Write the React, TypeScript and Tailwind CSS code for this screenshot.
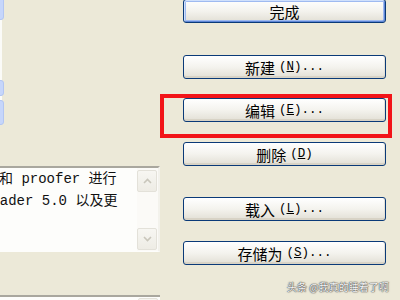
import React from "react";

const MONO = '"Liberation Mono", "Noto Sans CJK SC", monospace';
const CJK = '"Noto Sans CJK SC", sans-serif';

function XPButton({
  cjk,
  latin,
  def = false,
  className = "",
}: {
  cjk: string;
  latin?: React.ReactNode;
  def?: boolean;
  className?: string;
}) {
  return (
    <div
      className={`h-[24px] w-[203px] shrink-0 rounded-[3px] border border-[#0a3a78] bg-linear-to-b from-[#ffffff] via-[#f4f3ee] to-[#e2dfd5] flex items-center justify-center leading-none text-black whitespace-pre ${
        def
          ? "shadow-[inset_1px_1px_0_#cfe0fc,inset_-1px_-1px_0_#5f86d6,inset_0_0_0_2px_#9fbaf0]"
          : "shadow-[inset_0_-2px_0_#d8d3c6,inset_-1px_0_0_#e4e1d8]"
      } ${className}`}
    >
      <span className="text-[15px]" style={{ fontFamily: CJK }}>
        {cjk}
      </span>
      {latin && (
        <span className="ml-[4px] text-[12.5px]" style={{ fontFamily: MONO }}>
          {latin}
        </span>
      )}
    </div>
  );
}

function Chevron({ up }: { up: boolean }) {
  return (
    <svg width="9" height="6" viewBox="0 0 9 6">
      <path
        d={up ? "M1 5 L4.5 1.5 L8 5" : "M1 1 L4.5 4.5 L8 1"}
        fill="none"
        stroke="#c9c6bb"
        strokeWidth="1.6"
      />
    </svg>
  );
}

function ScrollBtn({ up }: { up: boolean }) {
  return (
    <div className="h-[22px] w-[20px] rounded-[2px] border border-[#e3e1d9] bg-linear-to-b from-[#f7f6f2] to-[#eeece5] flex items-center justify-center">
      <Chevron up={up} />
    </div>
  );
}

export default function App() {
  return (
    <div className="relative w-[400px] h-[300px] overflow-hidden bg-[#ECE9D8] flex items-start">
      {/* left column */}
      <div className="w-[160px] shrink-0 flex flex-col">
        <div className="h-[166px] shrink-0 flex flex-col items-start">
          <div className="mt-[-4px] ml-[-16px] h-[24px] w-[20px] shrink-0 rounded-[3px] border border-[#b3c6f2] bg-[#c6d6fb]" />
          <div className="h-[60px] w-[2px] shrink-0 bg-[#fbfbf8]" />
          <div className="ml-[-16px] h-[16px] w-[20px] shrink-0 rounded-[3px] border border-[#b3c6f2] bg-[#c6d6fb]" />
          <div className="h-[4px] w-[2px] shrink-0 bg-[#fbfbf8]" />
          <div className="ml-[-16px] h-[25px] w-[20px] shrink-0 rounded-[3px] border border-[#b3c6f2] bg-[#c6d6fb]" />
        </div>
        <div className="h-[86px] shrink-0 border-t-2 border-t-[#a9a79e] border-b border-b-[#fdfdfb] border-r-2 border-r-[#f3f2ec] bg-[#fdfdfb] flex">
          <div
            className="flex-1 overflow-hidden pt-0 text-[14px] leading-[22px] text-[#111] whitespace-pre"
            style={{ fontFamily: MONO }}
          >
            <div className="ml-[-1px]">和 proofer 进行</div>
            <div className="ml-[-17px]">Reader 5.0 以及更</div>
          </div>
          <div className="w-[21px] shrink-0 flex flex-col justify-between pt-[2px] pb-[1px] bg-[#fbfaf7]">
            <ScrollBtn up />
            <ScrollBtn up={false} />
          </div>
        </div>
        <div className="h-[43px] shrink-0" />
        <div className="h-[20px] shrink-0 border-t-2 border-t-[#a9a79e] bg-[#fdfdfb] flex justify-end pr-[2px]">
          <div className="mt-[1px] h-[20px] w-[20px] shrink-0 rounded-[2px] border border-[#e3e1d9] bg-[#f5f4ef]" />
        </div>
      </div>

      {/* right column of buttons */}
      <div className="ml-[23px] mt-[-1px] flex flex-col">
        <XPButton def cjk="完成" />
        <XPButton
          className="mt-[32px]"
          cjk="新建"
          latin={
            <>
              (<span className="underline">N</span>)...
            </>
          }
        />
        <XPButton
          className="mt-[19px]"
          cjk="编辑"
          latin={
            <>
              (<span className="underline">E</span>)...
            </>
          }
        />
        <XPButton
          className="mt-[20px]"
          cjk="删除"
          latin={
            <>
              (<span className="underline">D</span>)
            </>
          }
        />
        <XPButton
          className="mt-[31px]"
          cjk="载入"
          latin={
            <>
              (<span className="underline">L</span>)...
            </>
          }
        />
        <XPButton
          className="mt-[20px]"
          cjk="存储为"
          latin={
            <>
              (<span className="underline">S</span>)...
            </>
          }
        />
      </div>

      {/* red annotation box */}
      <div className="absolute left-[160px] top-[94px] w-[232px] h-[44px] border-4 border-[#f21418]" />

      {/* watermark */}
      <div
        className="absolute left-[287px] top-[280px] text-[10px] leading-[14px] text-[#f6f6f6] whitespace-pre [text-shadow:0_0_1px_#444,0_0_1px_#444,0_0_2px_#777]"
        style={{ fontFamily: CJK }}
      >
        头条 @我真的睡着了啊
      </div>
    </div>
  );
}
